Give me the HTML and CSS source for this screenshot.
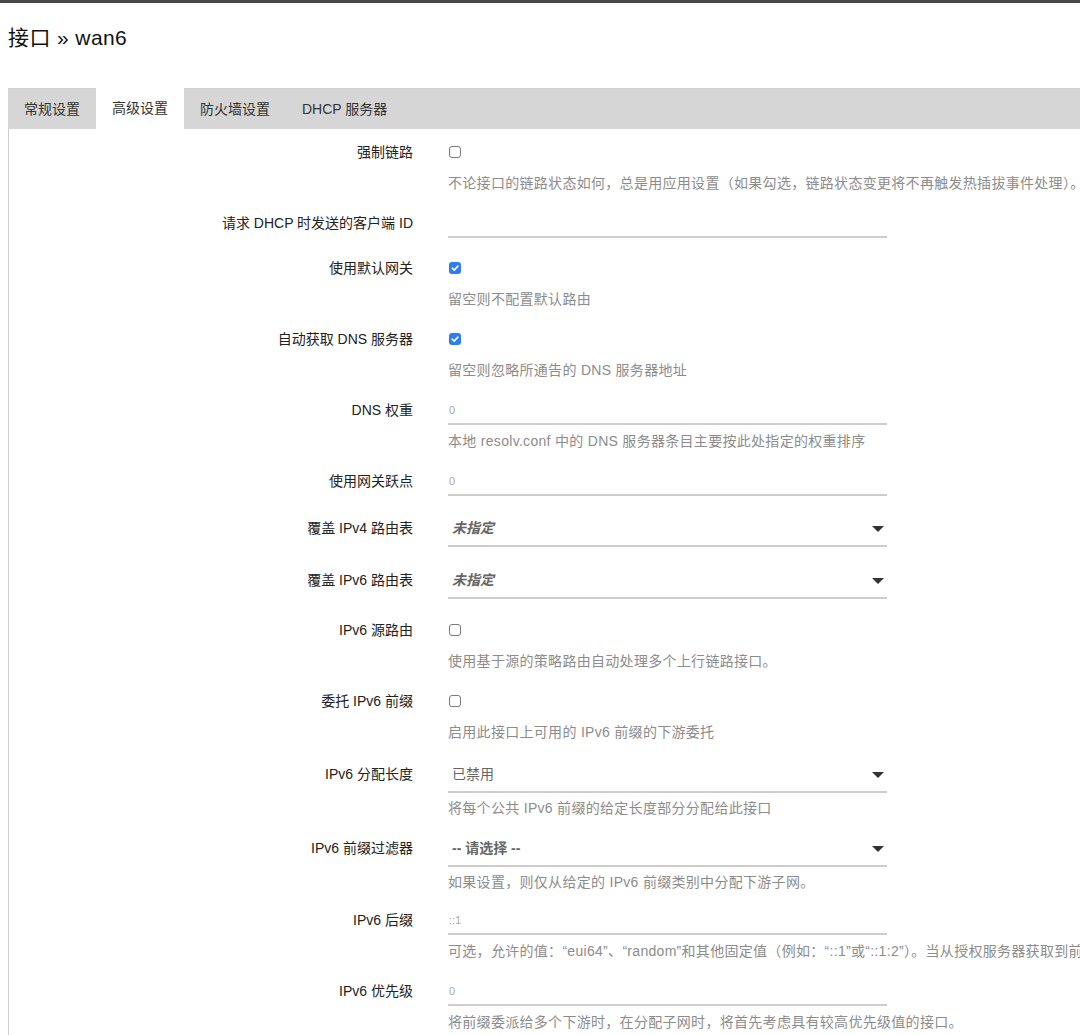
FILE: index.html
```html
<!DOCTYPE html>
<html lang="zh">
<head>
<meta charset="utf-8">
<title>接口 » wan6</title>
<link rel="stylesheet" href="styles.css">
</head>
<body>
<div class="topbar"></div>
<div class="page">
  <h2 class="title">接口 » wan6</h2>
  <div class="tabs">
    <div class="tab">常规设置</div>
    <div class="tab active">高级设置</div>
    <div class="tab">防火墙设置</div>
    <div class="tab">DHCP 服务器</div>
  </div>
  <div class="panel">
    <div class="row">
      <div class="label">强制链路</div>
      <div class="field">
        <div class="ctl-cb"><span class="cb"></span></div>
        <div class="desc">不论接口的链路状态如何，总是用应用设置（如果勾选，链路状态变更将不再触发热插拔事件处理）。</div>
      </div>
    </div>
    <div class="row">
      <div class="label">请求 DHCP 时发送的客户端 ID</div>
      <div class="field">
        <div class="ctl-text"></div>
      </div>
    </div>
    <div class="row">
      <div class="label">使用默认网关</div>
      <div class="field">
        <div class="ctl-cb"><span class="cb checked"><svg viewBox="0 0 12 12" width="12" height="12"><path d="M3.2 6.2 L5.2 8.1 L8.9 4.1" fill="none" stroke="#fff" stroke-width="1.6" stroke-linecap="round" stroke-linejoin="round"/></svg></span></div>
        <div class="desc">留空则不配置默认路由</div>
      </div>
    </div>
    <div class="row">
      <div class="label">自动获取 DNS 服务器</div>
      <div class="field">
        <div class="ctl-cb"><span class="cb checked"><svg viewBox="0 0 12 12" width="12" height="12"><path d="M3.2 6.2 L5.2 8.1 L8.9 4.1" fill="none" stroke="#fff" stroke-width="1.6" stroke-linecap="round" stroke-linejoin="round"/></svg></span></div>
        <div class="desc">留空则忽略所通告的 DNS 服务器地址</div>
      </div>
    </div>
    <div class="row">
      <div class="label">DNS 权重</div>
      <div class="field">
        <div class="ctl-text"><span class="ph">0</span></div>
        <div class="desc">本地 resolv.conf 中的 DNS 服务器条目主要按此处指定的权重排序</div>
      </div>
    </div>
    <div class="row">
      <div class="label">使用网关跃点</div>
      <div class="field">
        <div class="ctl-text"><span class="ph">0</span></div>
      </div>
    </div>
    <div class="row row-sel">
      <div class="label">覆盖 IPv4 路由表</div>
      <div class="field">
        <div class="ctl-select"><span class="sel-val em">未指定</span><span class="arrow"></span></div>
      </div>
    </div>
    <div class="row row-sel">
      <div class="label">覆盖 IPv6 路由表</div>
      <div class="field">
        <div class="ctl-select"><span class="sel-val em">未指定</span><span class="arrow"></span></div>
      </div>
    </div>
    <div class="row">
      <div class="label">IPv6 源路由</div>
      <div class="field">
        <div class="ctl-cb"><span class="cb"></span></div>
        <div class="desc">使用基于源的策略路由自动处理多个上行链路接口。</div>
      </div>
    </div>
    <div class="row">
      <div class="label">委托 IPv6 前缀</div>
      <div class="field">
        <div class="ctl-cb"><span class="cb"></span></div>
        <div class="desc">启用此接口上可用的 IPv6 前缀的下游委托</div>
      </div>
    </div>
    <div class="row row-sel row-sel-desc">
      <div class="label">IPv6 分配长度</div>
      <div class="field">
        <div class="ctl-select"><span class="sel-val">已禁用</span><span class="arrow"></span></div>
        <div class="desc desc-sel">将每个公共 IPv6 前缀的给定长度部分分配给此接口</div>
      </div>
    </div>
    <div class="row row-sel row-sel-desc">
      <div class="label">IPv6 前缀过滤器</div>
      <div class="field">
        <div class="ctl-select"><span class="sel-val strong">-- 请选择 --</span><span class="arrow"></span></div>
        <div class="desc desc-sel">如果设置，则仅从给定的 IPv6 前缀类别中分配下游子网。</div>
      </div>
    </div>
    <div class="row">
      <div class="label">IPv6 后缀</div>
      <div class="field">
        <div class="ctl-text"><span class="ph">::1</span></div>
        <div class="desc">可选，允许的值：“eui64”、“random”和其他固定值（例如：“::1”或“::1:2”）。当从授权服务器获取到前缀时使用</div>
      </div>
    </div>
    <div class="row">
      <div class="label">IPv6 优先级</div>
      <div class="field">
        <div class="ctl-text"><span class="ph">0</span></div>
        <div class="desc">将前缀委派给多个下游时，在分配子网时，将首先考虑具有较高优先级值的接口。</div>
      </div>
    </div>
  </div>
</div>
</body>
</html>
```

FILE: styles.css
```css
html, body {
  margin: 0;
  padding: 0;
  background: #fff;
}
body {
  width: 1080px;
  height: 1035px;
  overflow: hidden;
  font-family: "Liberation Sans", "Noto Sans CJK SC", sans-serif;
  color: #222;
  font-size: 14px;
}
.topbar {
  height: 3px;
  background: #484848;
}
.page {
  padding-left: 8px;
}
.title {
  margin: 0;
  padding-top: 21px;
  font-size: 21px;
  line-height: 28px;
  font-weight: normal;
  letter-spacing: 0.4px;
  color: #111;
}
.tabs {
  margin-top: 36px;
  display: flex;
  height: 41px;
  background: #d6d6d6;
  border-top: 1px solid #cfcfcf;
  box-sizing: border-box;
}
.tab {
  padding: 0 16px;
  line-height: 40px;
  font-size: 14px;
  color: #333;
}
.tab.active {
  background: #fff;
  margin-top: -1px;
  line-height: 41px;
  height: 41px;
}
.panel {
  border-left: 1px solid #cfcfcf;
  padding-top: 8px;
  min-height: 1000px;
}
.row {
  display: flex;
  align-items: flex-start;
  margin-bottom: 15px;
}
.row-sel {
  margin-bottom: 16px;
}
.row-sel-desc {
  margin-bottom: 13px;
}
.label {
  flex: none;
  width: 404px;
  text-align: right;
  line-height: 30px;
  font-size: 14px;
  color: #222;
}
.row-sel .label {
  line-height: 34px;
}
.field {
  flex: none;
  width: 439px;
  margin-left: 35px;
}
.ctl-cb {
  height: 30px;
  display: flex;
  align-items: center;
}
.cb {
  display: inline-flex;
  align-items: center;
  justify-content: center;
  box-sizing: border-box;
  width: 12px;
  height: 12px;
  margin-left: 1px;
  border: 1.4px solid #7a7a7a;
  border-radius: 3px;
  background: #fff;
}
.cb.checked {
  border: none;
  background: #2c7cf6;
}
.ctl-text {
  height: 30px;
  box-sizing: border-box;
  border-bottom: 2px solid #cdcdcd;
  line-height: 28px;
  padding-left: 1px;
}
.ph {
  font-size: 11px;
  color: #aaa;
}
.ctl-select {
  height: 36px;
  box-sizing: border-box;
  border-bottom: 2px solid #cdcdcd;
  display: flex;
  align-items: flex-start;
  justify-content: space-between;
}
.sel-val {
  line-height: 34px;
  padding-left: 4px;
  font-size: 14px;
  color: #666;
}
.sel-val.em {
  font-style: italic;
  font-weight: bold;
  color: #666;
}
.sel-val.strong {
  font-weight: bold;
  color: #666;
}
.arrow {
  width: 0;
  height: 0;
  margin-top: 15px;
  margin-right: 3px;
  border-left: 6px solid transparent;
  border-right: 6px solid transparent;
  border-top: 6px solid #333;
}
.desc {
  margin-top: 6px;
  line-height: 20px;
  font-size: 14px;
  letter-spacing: 0.3px;
  color: #8c8c8c;
  white-space: nowrap;
}
.desc.desc-sel {
  margin-top: 5px;
}
```
